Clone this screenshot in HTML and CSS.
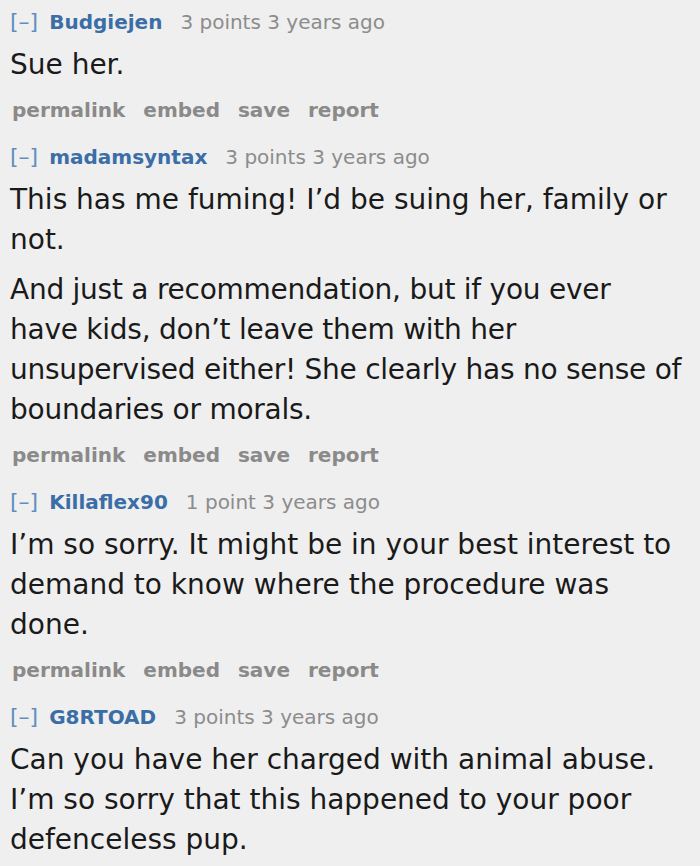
FILE: index.html
```html
<!DOCTYPE html>
<html>
<head>
<meta charset="utf-8">
<link rel="stylesheet" href="styles.css">
</head>
<body>
<div class="comments">
  <div class="comment">
    <div class="tagline"><span class="toggle">[–]</span><span class="author">Budgiejen</span><span class="meta">3 points 3 years ago</span></div>
    <div class="body">
      <p>Sue her.</p>
    </div>
    <ul class="buttons"><li>permalink</li><li>embed</li><li>save</li><li>report</li></ul>
  </div>
  <div class="comment">
    <div class="tagline"><span class="toggle">[–]</span><span class="author">madamsyntax</span><span class="meta">3 points 3 years ago</span></div>
    <div class="body">
      <p>This has me fuming! I’d be suing her, family or not.</p>
      <p class="tight">And just a recommendation, but if you ever<br>have kids, don’t leave them with her<br>unsupervised either! She clearly has no sense of<br>boundaries or morals.</p>
    </div>
    <ul class="buttons"><li>permalink</li><li>embed</li><li>save</li><li>report</li></ul>
  </div>
  <div class="comment">
    <div class="tagline"><span class="toggle">[–]</span><span class="author">Killaflex90</span><span class="meta">1 point 3 years ago</span></div>
    <div class="body">
      <p>I’m so sorry. It might be in your best interest to demand to know where the procedure was done.</p>
    </div>
    <ul class="buttons"><li>permalink</li><li>embed</li><li>save</li><li>report</li></ul>
  </div>
  <div class="comment">
    <div class="tagline"><span class="toggle">[–]</span><span class="author">G8RTOAD</span><span class="meta">3 points 3 years ago</span></div>
    <div class="body">
      <p>Can you have her charged with animal abuse. I’m so sorry that this happened to your poor defenceless pup.</p>
    </div>
  </div>
</div>
</body>
</html>
```
FILE: styles.css
```css
html, body {
  margin: 0;
  padding: 0;
  background: #efefef;
}
body {
  font-family: "DejaVu Sans", Verdana, sans-serif;
  color: #1a1a1a;
}
.comments {
  padding: 7px 8px 0 10px;
  display: flex;
  flex-direction: column;
  gap: 17px;
}
.tagline {
  font-size: 20px;
  line-height: 30px;
  white-space: nowrap;
}
.toggle {
  color: #5f8fc0;
  font-size: 22px;
  margin-right: 11px;
}
.author {
  color: #3b6ea6;
  font-weight: bold;
  margin-right: 18px;
}
.meta {
  color: #8c8c8c;
}
.body {
  margin-top: 8px;
}
.body p {
  margin: 0 0 10px;
  font-size: 28px;
  line-height: 40px;
}
.body p.tight {
  letter-spacing: -0.25px;
  white-space: nowrap;
}
.buttons {
  list-style: none;
  margin: 0;
  padding: 0 0 0 2px;
  display: flex;
  gap: 18px;
  font-size: 20px;
  line-height: 30px;
  font-weight: bold;
  color: #8a8a8a;
}
```
